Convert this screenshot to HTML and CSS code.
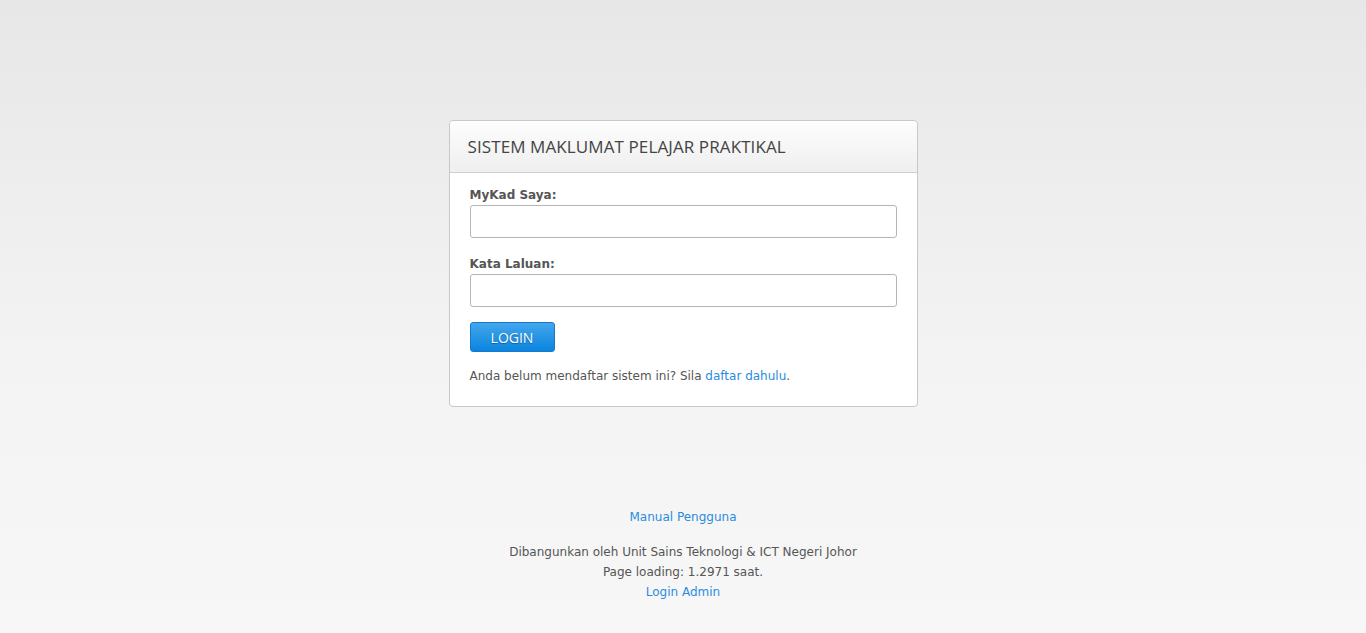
FILE: index.html
```html
<!DOCTYPE html>
<html lang="ms">
<head>
    <meta charset="UTF-8">
    <meta name="viewport" content="width=device-width, initial-scale=1.0">
    <title>Sistem Maklumat Pelajar Praktikal</title>
    <link rel="stylesheet" href="styles.css">
</head>
<body>
    <div class="login-box">
        <div class="login-head">
            <h2>SISTEM MAKLUMAT PELAJAR PRAKTIKAL</h2>
        </div>
        <form class="login-body" onsubmit="return false">
            <label for="mykad">MyKad Saya:</label>
            <input type="text" id="mykad" name="mykad">

            <label for="katalaluan">Kata Laluan:</label>
            <input type="password" id="katalaluan" name="katalaluan">

            <button type="submit" class="btn-login">LOGIN</button>

            <p class="daftar">Anda belum mendaftar sistem ini? Sila <a href="#">daftar dahulu</a>.</p>
        </form>
    </div>

    <div class="footer">
        <p class="manual"><a href="#">Manual Pengguna</a></p>
        <p>
            Dibangunkan oleh Unit Sains Teknologi &amp; ICT Negeri Johor<br>
            Page loading: 1.2971 saat.<br>
            <a href="#">Login Admin</a>
        </p>
    </div>
</body>
</html>
```

FILE: styles.css
```css
html {
    min-height: 100%;
    background: linear-gradient(to bottom, #e7e7e7 0%, #f3f3f3 55%, #f7f7f7 100%);
}

body {
    margin: 0;
    padding-top: 120px;
    font-family: "DejaVu Sans", Verdana, sans-serif;
    font-size: 12px;
    color: #555;
}

a {
    color: #2a8ce0;
    text-decoration: none;
}

.login-box {
    width: 467px;
    margin: 0 auto;
    background-color: #fff;
    border: 1px solid #c8c8c8;
    border-radius: 4px;
}

.login-head {
    height: 51px;
    border-bottom: 1px solid #cfcfcf;
    border-radius: 4px 4px 0 0;
    background: linear-gradient(to bottom, #fdfdfd, #efefef);
    padding: 0 18px;
    display: flex;
    align-items: center;
}

.login-head h2 {
    margin: 0;
    font-family: "Open Sans", sans-serif;
    font-weight: 400;
    font-size: 17px;
    color: #444;
    letter-spacing: 0.1px;
}

.login-body {
    padding: 14px 20px 22px 20px;
    display: flex;
    flex-direction: column;
    align-items: flex-start;
}

.login-body label {
    font-weight: bold;
    color: #555;
    line-height: 17px;
    margin-bottom: 1px;
}

.login-body input {
    width: 100%;
    box-sizing: border-box;
    height: 33px;
    border: 1px solid #b5b5b5;
    border-radius: 3px;
    background: #fff;
    margin: 0 0 18px 0;
    padding: 4px 8px;
    font-family: inherit;
}

.btn-login {
    width: 85px;
    height: 30px;
    margin-top: -3px;
    border: 1px solid #1a78c8;
    border-radius: 3px;
    background: linear-gradient(to bottom, #43a6ec, #0a85df);
    color: #fff;
    font-family: "Open Sans", sans-serif;
    font-size: 14px;
    text-shadow: 0 1px 1px rgba(0, 0, 0, 0.35);
    cursor: pointer;
}

.daftar {
    margin: 17px 0 0 0;
    line-height: 15px;
}

.footer {
    margin-top: 100px;
    text-align: center;
    line-height: 20px;
}

.footer p {
    margin: 0;
}

.footer .manual {
    margin-bottom: 15px;
}
```
